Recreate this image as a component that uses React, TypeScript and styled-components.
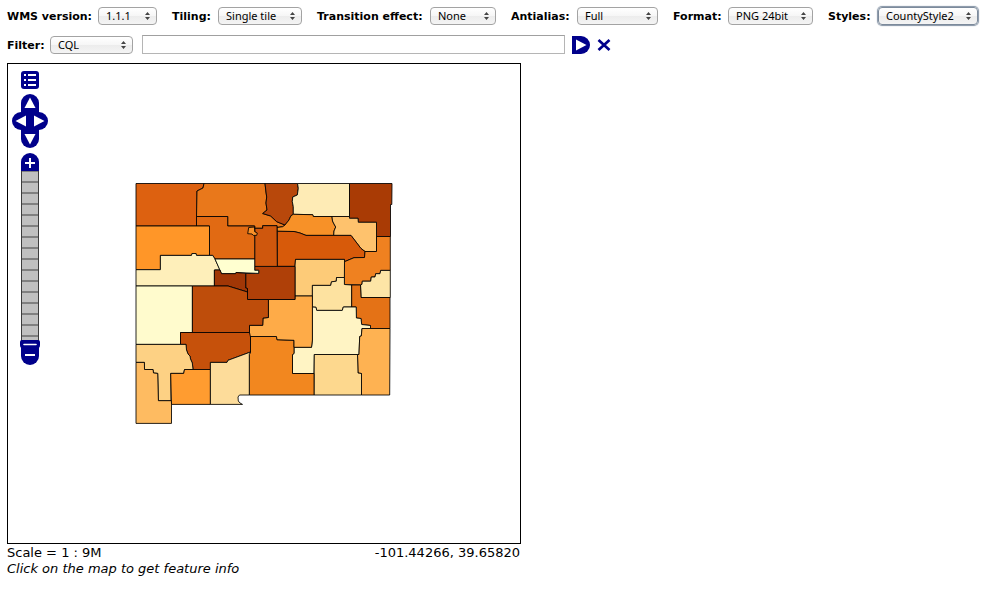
import React, { useId, useState } from 'react';
import styled, { createGlobalStyle } from 'styled-components';

const GlobalStyle = createGlobalStyle`
  *, *::before, *::after { box-sizing: border-box; }
  body {
    margin: 0;
    background: #fff;
    color: #000;
    font-family: 'DejaVu Sans', Verdana, sans-serif;
  }
`;

const NAVY = '#00008b';

const Page = styled.main`
  padding: 7px;
`;

const Toolbar = styled.form`
  display: flex;
  flex-direction: column;
  gap: 10px;
  margin-bottom: 9px;
`;

const OptionsRow = styled.div`
  display: flex;
  flex-wrap: wrap;
  column-gap: 15px;
  row-gap: 8px;
`;

const FilterRow = styled.div`
  display: flex;
  align-items: center;
  height: 19px;
`;

const Field = styled.div`
  display: flex;
  align-items: center;
  height: 18px;
`;

const Label = styled.label<{ $width: number }>`
  width: ${(p) => p.$width}px;
  padding-top: 2px;
  font-size: 11px;
  line-height: 16px;
  font-weight: bold;
  white-space: nowrap;
`;

const SelectBox = styled.span<{ $width: number }>`
  position: relative;
  display: block;
  width: ${(p) => p.$width}px;
  height: 18px;

  svg {
    position: absolute;
    top: 5px;
    right: 7px;
    pointer-events: none;
  }
`;

const Select = styled.select<{ $focused?: boolean }>`
  appearance: none;
  display: block;
  width: 100%;
  height: 18px;
  padding: 0 0 0 7px;
  border: 1px solid ${(p) => (p.$focused ? '#7c8a9b' : '#a3a3a3')};
  border-radius: 4px;
  background: linear-gradient(#ffffff, #f6f6f6 50%, #ececec 50%, #f4f4f4);
  box-shadow: ${(p) => (p.$focused ? '0 0 1px 1px #8493a5' : 'none')};
  color: #000;
  font-family: 'Noto Sans', 'Lucida Grande', sans-serif;
  font-size: 11px;
  line-height: 16px;
  outline: none;
`;

const FilterInput = styled.input`
  flex: 0 1 423px;
  min-width: 0;
  height: 19px;
  margin: 0 7px 0 9px;
  padding: 1px 3px;
  border: 1px solid #b5b5b5;
  border-top-color: #a0a0a0;
  background: #fff;
  font: inherit;
  font-size: 11px;
  outline: none;
`;

const IconButton = styled.button`
  display: block;
  padding: 0;
  border: 0;
  background: none;
  line-height: 0;
  cursor: pointer;

  svg { display: block; }
`;

const FilterActions = styled.div`
  display: flex;
  align-items: center;
  gap: 7px;
`;

const Viewer = styled.section`
  max-width: 514px;
`;

const MapFrame = styled.div`
  position: relative;
  border: 1px solid #000;
`;

const MapDrawing = styled.svg`
  display: block;
  width: 100%;
  height: auto;
`;

const MapControls = styled.div`
  position: absolute;
  top: 7px;
  left: 4px;
  display: flex;
  flex-direction: column;
  align-items: center;
  width: 36px;
  gap: 5px;
`;

const PanPad = styled.div`
  display: grid;
  grid-template-columns: repeat(4, 9px);
  grid-auto-rows: 18px;
`;

const PanButton = styled(IconButton)<{ $column: number; $row: number }>`
  grid-column: ${(p) => p.$column} / span 2;
  grid-row: ${(p) => p.$row};
`;

const ZoomBar = styled.div`
  display: flex;
  flex-direction: column;
  align-items: center;
`;

const ZoomTrack = styled.div`
  position: relative;
  width: 18px;
  height: 176px;
  border: 1px solid #3c3c3c;
  border-width: 0 1px;
  background: repeating-linear-gradient(#808080 0 1px, #c0c0c0 1px 10px, #808080 10px 11px);
`;

const ZoomHandle = styled(IconButton)`
  position: absolute;
  bottom: -2px;
  left: -2px;
  z-index: 1;
`;

const StatusLine = styled.div`
  display: flex;
  justify-content: space-between;
  padding: 1px 1px 0 0;
  font-size: 13px;
  line-height: 16px;
`;

const Hint = styled.p`
  margin: 0;
  font-size: 13px;
  line-height: 16px;
  font-style: italic;
`;

type PickerProps = {
  label: string;
  labelWidth: number;
  width: number;
  options: string[];
  focused?: boolean;
};

function Picker({ label, labelWidth, width, options, focused }: PickerProps) {
  const id = useId();
  const [value, setValue] = useState(options[0]);
  return (
    <Field>
      <Label htmlFor={id} $width={labelWidth}>{label}</Label>
      <SelectBox $width={width}>
        <Select id={id} value={value} $focused={focused} onChange={(e) => setValue(e.target.value)}>
          {options.map((o) => <option key={o}>{o}</option>)}
        </Select>
        <svg width="5" height="8" viewBox="0 0 5 8" fill="#444" aria-hidden="true">
          <path d="M2.5 0 5 3H0zM2.5 8 0 5h5z" />
        </svg>
      </SelectBox>
    </Field>
  );
}

type County = { name: string; fill: string; points: string };

const counties: County[] = [
  { name: 'San Juan', fill: '#dd6110', points: '136,183.5 204,183.5 203,188 197,191 196.5,226 136,226' },
  { name: 'Rio Arriba', fill: '#e9781b', points: '204,183.5 265,183.5 266,192 266.7,197 266,203 267,210 262.7,213.5 270.7,216 276.7,221.7 285,225 282.7,226.7 277,227.5 277,225.7 262.7,225.7 262.7,228.3 254.7,228.3 254.7,226 227.7,226 227.7,216.5 196.5,216.5 197,191 203,188' },
  { name: 'Taos', fill: '#b8480b', points: '265,183.5 297.5,183.5 298.3,188.3 297.3,195 292.7,197 292.3,201.7 293.3,206.7 293.3,214.3 291,215.7 289,220 285,225 276.7,221.7 270.7,216 262.7,213.5 267,210 266,203 266.7,197 266,192' },
  { name: 'Colfax', fill: '#feebb5', points: '297.5,183.5 349.5,183.5 349.5,216.5 313.3,216.5 312.7,214.7 293.3,214.3 293.3,206.7 292.3,201.7 292.7,197 297.3,195 298.3,188.3' },
  { name: 'Union', fill: '#a93b05', points: '349.5,183.5 392,183.5 391.8,204.5 390.5,204.5 390.5,236.5 376.5,236.5 376.5,222.3 358.3,222.3 358,218.3 349.5,218.3' },
  { name: 'Mora', fill: '#f79128', points: '291,215.7 293.3,214.3 312.7,214.7 313.3,216.5 332,216.5 332.5,221 334,224 335.7,227 334,231 333.7,235.4 306,235.4 300,233 294,231.5 277.3,231.3 277,227.5 282.7,226.7 285,225 289,220' },
  { name: 'Harding', fill: '#fec26d', points: '332,216.5 349.5,216.5 349.5,218.3 358,218.3 358.3,222.3 376.5,222.3 376.5,251.5 365,251.5 361,248.5 351,235.4 333.7,235.4 334,231 335.7,227 334,224 332.5,221' },
  { name: 'San Miguel', fill: '#d75a0a', points: '277.3,231.3 294,231.5 300,233 306,235.4 351,235.4 361,248.5 365,251.5 364.5,257.5 354,257.7 344.5,261.7 344.5,259.4 295.5,259.4 295,266.4 277.3,266.4' },
  { name: 'Quay', fill: '#ef8120', points: '376.5,236.5 390.3,236.5 390.3,270.4 380.7,270.4 380,273.7 375.7,273.7 375,277 371.3,277 370.7,281.2 362.3,281.2 362,284.3 360.5,285 344.4,284.5 344.5,261.7 354,257.7 364.5,257.5 365,251.5 376.5,251.5' },
  { name: 'Curry', fill: '#fde5a6', points: '390.3,270.4 380.7,270.4 380,273.7 375.7,273.7 375,277 371.3,277 370.7,281.2 362.3,281.2 362,284.3 360.5,285 361,297.5 390.3,297.5' },
  { name: 'Guadalupe', fill: '#fdcb78', points: '295.5,259.4 344.5,259.4 344.4,277.5 336.5,277.5 336.3,281.2 331.5,281.8 330.7,285.4 312.4,285.4 312.4,296 295,296 295,266.4' },
  { name: 'De Baca', fill: '#fde2a0', points: '344.4,277.5 344.4,284.5 351.7,285 351.7,307 343.3,307 342.3,310.4 316.7,310.4 316,307.3 312.4,307 312.4,285.4 330.7,285.4 331.5,281.8 336.3,281.2 336.5,277.5' },
  { name: 'Roosevelt', fill: '#e47216', points: '351.7,285 360.5,285 361,297.5 390,297.5 390,328.5 370.5,328.5 370.5,325.5 361.7,324.5 361,318.5 356.4,318 356.2,307 351.7,307' },
  { name: 'Chaves', fill: '#fff4c4', points: '312.4,307 316,307.3 316.7,310.4 342.3,310.4 343.3,307 356.2,307 356.4,318 361,318.5 361.7,324.5 370.5,325.5 370.5,328.5 362,328.5 361.3,336 359.7,336.5 359,354.5 314.3,354.5 314,373.5 292.5,373.5 292.5,354.5 294,353.5 294,347.3 311.5,347.3 312.4,340' },
  { name: 'Lea', fill: '#feb252', points: '362,328.5 390,328.5 389.7,395 361.5,395 361.5,373.5 358,373 357.5,354.5 359,354.5 359.7,336.5 361.3,336' },
  { name: 'Eddy', fill: '#fdd88e', points: '314.3,354.5 357.5,354.5 358,373 361.5,373.5 361.5,395 314,395' },
  { name: 'Otero', fill: '#f2871f', points: '250.5,336.5 276.5,336.5 277,339.7 294,340.3 294,353.5 292.5,354.5 292.5,373.5 314,373.5 314,395 249.3,395 249.3,354.5 250.5,352' },
  { name: 'Lincoln', fill: '#feab48', points: '268.4,299.5 295,299.5 295,296 312.4,296 312.4,340 311.5,347.3 294,347.3 294,340.3 277,339.7 276.5,336.5 249.5,336.5 249.5,325.3 262.7,325.3 263,318 268.4,317.5' },
  { name: 'Torrance', fill: '#af4008', points: '254.7,266.4 295,266.4 295,299.5 247.5,299.5 247.5,288.5 245.7,288 245.7,273.4 258.7,273.4 258.7,270.3 254.7,270.3' },
  { name: 'Santa Fe', fill: '#cf570d', points: '254.7,228.3 262.7,228.3 262.7,225.7 277,225.7 277.3,266.4 254.7,266.4' },
  { name: 'Sandoval', fill: '#e16a13', points: '196.5,216.5 227.7,216.5 227.7,226 254.7,226 254.7,259 215,259 212.7,255.4 209.5,255.4 209.5,226 196.5,226' },
  { name: 'Los Alamos', fill: '#f89129', points: '248.7,227.5 254.5,227 254.7,231.7 257.3,233 256.7,235.4 253.3,235.4 252,234 247.7,233.7' },
  { name: 'McKinley', fill: '#ff9628', points: '136,226 209.5,226 209.5,255.4 196.5,255.4 196,253.5 192,253.5 191.5,255.4 160.4,255.4 160.4,269.7 136,269.7' },
  { name: 'Cibola', fill: '#feefba', points: '136,269.7 160.4,269.7 160.4,255.4 191.5,255.4 192,253.5 196,253.5 196.5,255.4 212.7,255.4 215,259 220,270 214.4,270 214.4,286 136,286' },
  { name: 'Bernalillo', fill: '#ffffd0', points: '215,259 254.7,259 254.7,270.3 258.7,270.3 258.7,273.4 236,272.5 235.5,273.7 221.5,273.7' },
  { name: 'Valencia', fill: '#a13706', points: '214.4,270 220,270 221.5,273.7 235.5,273.7 236,272.5 245.7,273.4 245.7,288 247.5,288.5 247.5,292 228,286 214.4,286' },
  { name: 'Catron', fill: '#fffbcd', points: '136,286 192.4,286 192.4,332.5 180.5,332.5 180.5,344.4 136,344.4' },
  { name: 'Socorro', fill: '#be4d0b', points: '192.4,286 228,286 247.5,292 247.5,299.5 268.4,299.5 268.4,317.5 263,318 262.7,325.3 249.5,325.3 249.5,332.5 192.4,332.5' },
  { name: 'Sierra', fill: '#c6510b', points: '180.5,332.5 249.5,332.5 250.5,337 250.5,352 228,360.3 227,362.4 210.4,362.4 210.4,369.5 193,369.5 192.3,363 190.5,359 190,356 188,354 186.5,350 186,344.4 180.5,344.4' },
  { name: 'Grant', fill: '#fdd184', points: '136,344.4 186,344.4 186.5,350 188,354 190,356 190.5,359 192.3,363 193,369.5 184.5,369.5 183.7,373.4 170.7,373.4 171,400.7 158.4,400.7 157.7,373.4 153.5,373 153,369.5 144.5,369.5 144.4,362.4 136,362.4' },
  { name: 'Hidalgo', fill: '#febb61', points: '136,362.4 144.4,362.4 144.5,369.5 153,369.5 153.5,373 157.7,373.4 158.4,400.7 171.5,400.7 171.5,423.4 136,423.4' },
  { name: 'Luna', fill: '#ff9c30', points: '170.7,373.4 183.7,373.4 184.5,369.5 210.4,369.5 210.4,404.4 171.5,404.4' },
  { name: 'Dona Ana', fill: '#fddc9a', points: '210.4,362.4 227,362.4 228,360.3 250.5,352 249.3,354.5 249.3,395 239.5,395 238,397 238.3,401 240,403 242.5,404.4 210.4,404.4' },
];

const panDirections = [
  { name: 'Pan up', column: 2, row: 1, angle: 0 },
  { name: 'Pan left', column: 1, row: 2, angle: -90 },
  { name: 'Pan right', column: 3, row: 2, angle: 90 },
  { name: 'Pan down', column: 2, row: 3, angle: 180 },
];

function CountyMap() {
  return (
    <MapDrawing viewBox="8 64 512 479" role="img" aria-label="County map">
      <g stroke="#000" strokeOpacity="0.85" strokeWidth="1" strokeLinejoin="round">
        {counties.map((c) => (
          <polygon key={c.name} fill={c.fill} points={c.points} />
        ))}
      </g>
    </MapDrawing>
  );
}

export default function App() {
  const [filter, setFilter] = useState('');
  return (
    <>
      <GlobalStyle />
      <Page>
        <Toolbar onSubmit={(e) => e.preventDefault()}>
          <OptionsRow>
            <Picker label="WMS version:" labelWidth={91} width={59} options={['1.1.1', '1.3.0']} />
            <Picker label="Tiling:" labelWidth={46} width={84} options={['Single tile', 'Tiled']} />
            <Picker label="Transition effect:" labelWidth={113} width={66} options={['None', 'Resize']} />
            <Picker label="Antialias:" labelWidth={66} width={81} options={['Full', 'Text only', 'Disabled']} />
            <Picker label="Format:" labelWidth={55} width={85} options={['PNG 24bit', 'PNG 8bit', 'GIF', 'JPEG']} />
            <Picker label="Styles:" labelWidth={50} width={100} options={['CountyStyle2', 'Default']} focused />
          </OptionsRow>
          <FilterRow>
            <Picker label="Filter:" labelWidth={43} width={83} options={['CQL', 'OGC', 'FeatureID']} />
            <FilterInput aria-label="Filter expression" value={filter} onChange={(e) => setFilter(e.target.value)} />
            <FilterActions>
              <IconButton type="submit" aria-label="Apply filter">
                <svg width="18" height="18" viewBox="0 0 18 18">
                  <path d="M0 0h9a9 9 0 0 1 0 18H0z" fill={NAVY} />
                  <path d="M4 3.5v11L14.5 9z" fill="#fff" />
                </svg>
              </IconButton>
              <IconButton type="button" aria-label="Reset filter" onClick={() => setFilter('')}>
                <svg width="14" height="14" viewBox="0 0 14 14">
                  <path d="m1.5 2 11 10M12.5 2l-11 10" stroke={NAVY} strokeWidth="2.7" />
                </svg>
              </IconButton>
            </FilterActions>
          </FilterRow>
        </Toolbar>

        <Viewer>
          <MapFrame>
            <CountyMap />
            <MapControls>
              <IconButton type="button" aria-label="Layer options">
                <svg width="18" height="18" viewBox="0 0 18 18">
                  <rect width="18" height="18" rx="3" fill={NAVY} />
                  <path d="M3 4h2M3 9h2M3 14h2M7 4h8M7 9h8M7 14h8" stroke="#fff" strokeWidth="2" />
                </svg>
              </IconButton>
              <PanPad>
                {panDirections.map((d) => (
                  <PanButton key={d.name} type="button" aria-label={d.name} $column={d.column} $row={d.row}>
                    <svg width="18" height="18" viewBox="0 0 18 18">
                      <g transform={`rotate(${d.angle} 9 9)`}>
                        <path d="M0 18V9a9 9 0 0 1 18 0v9z" fill={NAVY} />
                        <path d="M9 3.5 14.5 14h-11z" fill="#fff" />
                      </g>
                    </svg>
                  </PanButton>
                ))}
              </PanPad>
              <ZoomBar>
                <IconButton type="button" aria-label="Zoom in">
                  <svg width="18" height="18" viewBox="0 0 18 18">
                    <path d="M0 18V9a9 9 0 0 1 18 0v9z" fill={NAVY} />
                    <path d="M9 5v10M4 10h10" stroke="#fff" strokeWidth="2" />
                  </svg>
                </IconButton>
                <ZoomTrack>
                  <ZoomHandle type="button" aria-label="Zoom level">
                    <svg width="20" height="9" viewBox="0 0 20 9">
                      <path d="M2 0h16q2 0 2 2v3q0 3-3 4H3Q0 8 0 5V2q0-2 2-2z" fill={NAVY} />
                      <path d="M4 4.5h12" stroke="#fff" strokeWidth="1.6" strokeLinecap="round" />
                    </svg>
                  </ZoomHandle>
                </ZoomTrack>
                <IconButton type="button" aria-label="Zoom out">
                  <svg width="18" height="18" viewBox="0 0 18 18">
                    <path d="M0 0v9a9 9 0 0 0 18 0V0z" fill={NAVY} />
                    <path d="M4 8h10" stroke="#fff" strokeWidth="2" />
                  </svg>
                </IconButton>
              </ZoomBar>
            </MapControls>
          </MapFrame>
          <StatusLine>
            <span>Scale = 1 : 9M</span>
            <span>-101.44266, 39.65820</span>
          </StatusLine>
          <Hint>Click on the map to get feature info</Hint>
        </Viewer>
      </Page>
    </>
  );
}
